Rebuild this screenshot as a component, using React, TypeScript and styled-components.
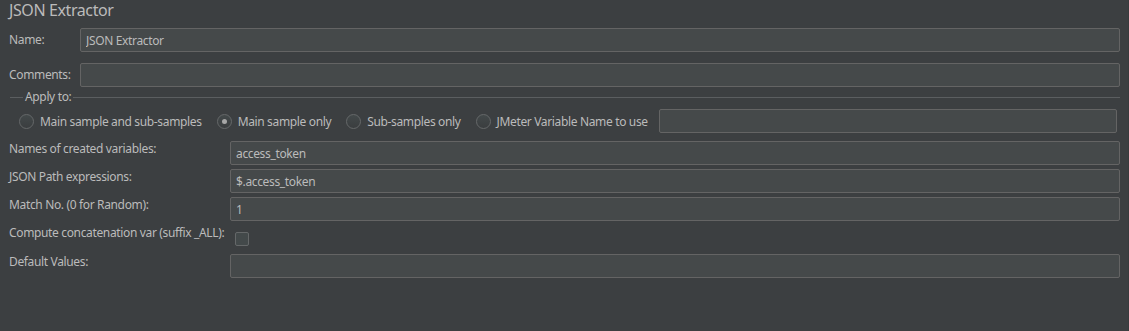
import styled, { createGlobalStyle } from "styled-components"

const GlobalStyle = createGlobalStyle`
    html, body {
        margin: 0;
        padding: 0;
        height: 100%;
        background: #3c3f41;
    }
    #root {
        height: 100%;
    }
`

const Page = styled.div`
    box-sizing: border-box;
    height: 100%;
    padding: 0 8px 0 9px;
    background: #3c3f41;
    color: #bbbbbb;
    font-family: "Noto Sans", "Open Sans", sans-serif;
    font-size: 12px;
    letter-spacing: -0.35px;
    border-right: 1px solid #393b3d;
`

const Title = styled.div`
    height: 20px;
    line-height: 20px;
    font-size: 16px;
    margin-bottom: 8px;
    letter-spacing: -0.4px;
`

const Row = styled.div<{ $gap?: number }>`
    display: grid;
    grid-template-columns: 71px 1fr;
    align-items: center;
    margin-bottom: ${p => p.$gap ?? 0}px;
`

const Label = styled.label`
    white-space: nowrap;
    line-height: 16px;
`

const Field = styled.input`
    box-sizing: border-box;
    width: 100%;
    height: 24px;
    margin: 0;
    padding: 0 5px;
    background: #45494a;
    border: 1px solid #646464;
    border-radius: 2px;
    color: #bbbbbb;
    font-family: inherit;
    font-size: 12px;
    letter-spacing: inherit;
    outline: none;
`

const Group = styled.fieldset`
    margin: 2px 0 0 1px;
    padding: 4px 3px 0 9px;
    border: none;
    border-top: 1px solid #5b5e60;
    min-width: 0;
`

const Legend = styled.legend`
    margin-left: 4px;
    padding: 0 2px;
    line-height: 16px;
`

const RadioRow = styled.div`
    display: flex;
    align-items: center;
    height: 24px;
`

const RadioItem = styled.label`
    display: flex;
    align-items: center;
    gap: 6px;
    margin-right: 15px;
    white-space: nowrap;
`

const Radio = styled.span<{ $checked?: boolean }>`
    box-sizing: border-box;
    width: 15px;
    height: 15px;
    border-radius: 50%;
    border: 1px solid #656869;
    background: linear-gradient(#43494a, #3a3d3f);
    display: flex;
    align-items: center;
    justify-content: center;
    &::after {
        content: "";
        display: ${p => (p.$checked ? "block" : "none")};
        width: 5px;
        height: 5px;
        border-radius: 50%;
        background: #a7a7a7;
    }
`

const VarField = styled(Field)`
    flex: 1;
    margin-left: -4px;
`

const Grid = styled.div`
    display: grid;
    grid-template-columns: 221px 1fr;
    row-gap: 4px;
    margin-top: 8px;
`

const GridLabel = styled.div`
    white-space: nowrap;
    line-height: 16px;
    align-self: start;
`

const CheckCell = styled.div`
    height: 23px;
    display: flex;
    align-items: center;
    padding-top: 2px;
`

const Checkbox = styled.span`
    box-sizing: border-box;
    display: block;
    width: 14px;
    height: 14px;
    margin-left: 5px;
    border: 1px solid #656869;
    border-radius: 2px;
    background: #43494a;
`

const App = () => {
    return (
        <>
            <GlobalStyle />
            <Page>
                <Title>JSON Extractor</Title>
                <Row $gap={11}>
                    <Label>Name:</Label>
                    <Field defaultValue="JSON Extractor" />
                </Row>
                <Row>
                    <Label>Comments:</Label>
                    <Field defaultValue="" />
                </Row>
                <Group>
                    <Legend>Apply to:</Legend>
                    <RadioRow>
                        <RadioItem><Radio />Main sample and sub-samples</RadioItem>
                        <RadioItem><Radio $checked />Main sample only</RadioItem>
                        <RadioItem><Radio />Sub-samples only</RadioItem>
                        <RadioItem><Radio />JMeter Variable Name to use</RadioItem>
                        <VarField defaultValue="" />
                    </RadioRow>
                </Group>
                <Grid>
                    <GridLabel>Names of created variables:</GridLabel>
                    <Field defaultValue="access_token" />
                    <GridLabel>JSON Path expressions:</GridLabel>
                    <Field defaultValue="$.access_token" />
                    <GridLabel>Match No. (0 for Random):</GridLabel>
                    <Field defaultValue="1" />
                    <GridLabel>Compute concatenation var (suffix _ALL):</GridLabel>
                    <CheckCell><Checkbox /></CheckCell>
                    <GridLabel>Default Values:</GridLabel>
                    <Field defaultValue="" />
                </Grid>
            </Page>
        </>
    )
}

export default App
